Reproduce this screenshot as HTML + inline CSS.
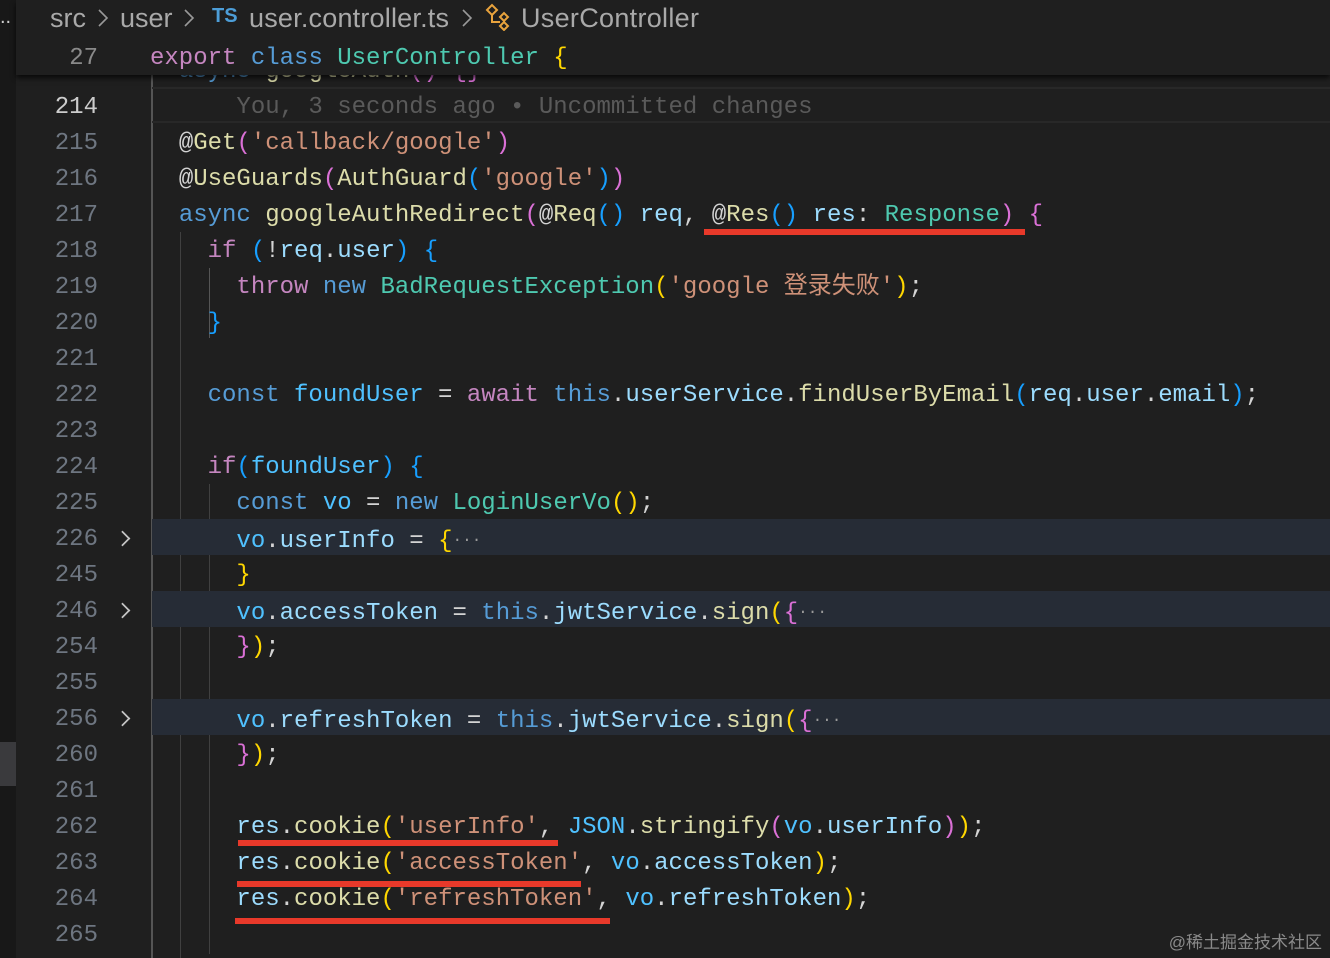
<!DOCTYPE html>
<html><head><meta charset="utf-8"><style>
body{margin:0;width:1330px;height:958px;background:#1f1f1f;overflow:hidden;position:relative;font-family:"Liberation Mono",monospace;font-size:24px;}
.strip{position:absolute;left:0;top:0;width:16px;height:958px;background:#181818;}
.blk{position:absolute;left:0;top:742px;width:16px;height:44px;background:#3a3a3d;}
.row{position:absolute;left:0;width:1330px;height:36px;line-height:42px;white-space:pre;}
.ln{position:absolute;left:20px;width:78px;text-align:right;color:#6e7681;}
.code{position:absolute;left:150px;color:#d4d4d4;}
.hl{position:absolute;left:152px;right:0;top:0;height:36px;background:#262c36;}
.chev{position:absolute;left:116px;top:13px;width:11px;height:11px;border-right:2px solid #c5c5c5;border-top:2px solid #c5c5c5;transform:rotate(45deg) scale(.85);}
.k{color:#569cd6}.c{color:#c586c0}.f{color:#dcdcaa}.s{color:#ce9178}.v{color:#9cdcfe}.t{color:#4ec9b0}
.y{color:#ffd700}.p{color:#da70d6}.b{color:#179fff}.at{color:#d4d4d4}
.g{position:absolute;top:0;width:1px;background:#404040;}
.red{position:absolute;height:6px;background:#e8392a;}
.ell{color:#9a9a9a;font-size:16px;vertical-align:3px;}
.bc{position:absolute;top:0;line-height:36px;font-family:'Liberation Sans',sans-serif;font-size:27px;color:#a9a9a9;white-space:pre;}
</style></head><body>
<div class="strip"></div><div class="blk"></div>

<div style="position:absolute;left:151px;top:75px;width:2px;height:883px;background:#555;"></div>
<div class="g" style="left:180px;top:232px;height:726px;"></div>
<div class="g" style="left:209px;top:268px;height:70px;background:#555"></div>
<div class="g" style="left:209px;top:484px;height:470px;"></div>

<div class="row" style="top:51px"><span class="code"><span class="at">  </span><span class="k">async</span> <span class="f">googleAuth</span><span class="p">()</span> <span class="p">{}</span></span></div>

<div class="row" style="top:87px;border-top:2px solid #282828;border-bottom:2px solid #282828;height:32px;left:152px;width:1178px;"></div>
<div class="row" style="top:87px"><span class="ln" style="color:#cccccc">214</span><span class="code" style="color:#5a5a5a">      You, 3 seconds ago • Uncommitted changes</span></div>
<div class="row" style="top:123px"><span class="ln">215</span><span class="code">  <span class="at">@</span><span class="f">Get</span><span class="p">(</span><span class="s">'callback/google'</span><span class="p">)</span></span></div>
<div class="row" style="top:159px"><span class="ln">216</span><span class="code">  <span class="at">@</span><span class="f">UseGuards</span><span class="p">(</span><span class="f">AuthGuard</span><span class="b">(</span><span class="s">'google'</span><span class="b">)</span><span class="p">)</span></span></div>
<div class="row" style="top:195px"><span class="ln">217</span><span class="code">  <span class="k">async</span> <span class="f">googleAuthRedirect</span><span class="p">(</span><span class="at">@</span><span class="f">Req</span><span class="b">()</span> <span class="v">req</span>, <span class="at">@</span><span class="f">Res</span><span class="b">()</span> <span class="v">res</span>: <span class="t">Response</span><span class="p">)</span> <span class="p">{</span></span></div>
<div class="row" style="top:231px"><span class="ln">218</span><span class="code">    <span class="c">if</span> <span class="b">(</span>!<span class="v">req</span>.<span class="v">user</span><span class="b">)</span> <span class="b">{</span></span></div>
<div class="row" style="top:267px"><span class="ln">219</span><span class="code">      <span class="c">throw</span> <span class="k">new</span> <span class="t">BadRequestException</span><span class="y">(</span><span class="s" style="font-family:'Liberation Mono','Noto Sans CJK SC',monospace">'google 登录失败'</span><span class="y">)</span>;</span></div>
<div class="row" style="top:303px"><span class="ln">220</span><span class="code">    <span class="b">}</span></span></div>
<div class="row" style="top:339px"><span class="ln">221</span></div>
<div class="row" style="top:375px"><span class="ln">222</span><span class="code">    <span class="k">const</span> <span class="v" style="color:#4fc1ff">foundUser</span> = <span class="c">await</span> <span class="k">this</span>.<span class="v">userService</span>.<span class="f">findUserByEmail</span><span class="b">(</span><span class="v">req</span>.<span class="v">user</span>.<span class="v">email</span><span class="b">)</span>;</span></div>
<div class="row" style="top:411px"><span class="ln">223</span></div>
<div class="row" style="top:447px"><span class="ln">224</span><span class="code">    <span class="c">if</span><span class="b">(</span><span class="v" style="color:#4fc1ff">foundUser</span><span class="b">)</span> <span class="b">{</span></span></div>
<div class="row" style="top:483px"><span class="ln">225</span><span class="code">      <span class="k">const</span> <span class="v" style="color:#4fc1ff">vo</span> = <span class="k">new</span> <span class="t">LoginUserVo</span><span class="y">()</span>;</span></div>
<div class="row" style="top:519px"><div class="hl"></div><span class="ln">226</span><div class="chev"></div><span class="code">      <span class="v" style="color:#4fc1ff">vo</span>.<span class="v">userInfo</span> = <span class="y">{</span><span class="ell">···</span></span></div>
<div class="row" style="top:555px"><span class="ln">245</span><span class="code">      <span class="y">}</span></span></div>
<div class="row" style="top:591px"><div class="hl"></div><span class="ln">246</span><div class="chev"></div><span class="code">      <span class="v" style="color:#4fc1ff">vo</span>.<span class="v">accessToken</span> = <span class="k">this</span>.<span class="v">jwtService</span>.<span class="f">sign</span><span class="y">(</span><span class="p">{</span><span class="ell">···</span></span></div>
<div class="row" style="top:627px"><span class="ln">254</span><span class="code">      <span class="p">}</span><span class="y">)</span>;</span></div>
<div class="row" style="top:663px"><span class="ln">255</span></div>
<div class="row" style="top:699px"><div class="hl"></div><span class="ln">256</span><div class="chev"></div><span class="code">      <span class="v" style="color:#4fc1ff">vo</span>.<span class="v">refreshToken</span> = <span class="k">this</span>.<span class="v">jwtService</span>.<span class="f">sign</span><span class="y">(</span><span class="p">{</span><span class="ell">···</span></span></div>
<div class="row" style="top:735px"><span class="ln">260</span><span class="code">      <span class="p">}</span><span class="y">)</span>;</span></div>
<div class="row" style="top:771px"><span class="ln">261</span></div>
<div class="row" style="top:807px"><span class="ln">262</span><span class="code">      <span class="v">res</span>.<span class="f">cookie</span><span class="y">(</span><span class="s">'userInfo'</span>, <span class="v" style="color:#4fc1ff">JSON</span>.<span class="f">stringify</span><span class="p">(</span><span class="v" style="color:#4fc1ff">vo</span>.<span class="v">userInfo</span><span class="p">)</span><span class="y">)</span>;</span></div>
<div class="row" style="top:843px"><span class="ln">263</span><span class="code">      <span class="v">res</span>.<span class="f">cookie</span><span class="y">(</span><span class="s">'accessToken'</span>, <span class="v" style="color:#4fc1ff">vo</span>.<span class="v">accessToken</span><span class="y">)</span>;</span></div>
<div class="row" style="top:879px"><span class="ln">264</span><span class="code">      <span class="v">res</span>.<span class="f">cookie</span><span class="y">(</span><span class="s">'refreshToken'</span>, <span class="v" style="color:#4fc1ff">vo</span>.<span class="v">refreshToken</span><span class="y">)</span>;</span></div>
<div class="row" style="top:915px"><span class="ln">265</span></div>

<div class="red" style="left:704px;top:229px;width:321px;"></div>
<div class="red" style="left:238px;top:840px;width:320px;"></div>
<div class="red" style="left:237px;top:881px;width:344px;"></div>
<div class="red" style="left:235px;top:918px;width:375px;"></div>

<!-- sticky header -->
<div style="position:absolute;left:16px;top:0;width:1314px;height:75px;background:#1f1f1f;box-shadow:0 3px 5px rgba(0,0,0,.7);"></div>
<div style="position:absolute;left:0;top:0;width:16px;height:38px;color:#ccc;font-family:'Liberation Sans',sans-serif;font-size:20px;line-height:34px;">..</div>
<span class="bc" style="left:50px">src</span>
<svg style="position:absolute;left:97px;top:8px" width="12" height="20" viewBox="0 0 12 20"><path d="M2 2 L10 10 L2 18" fill="none" stroke="#999" stroke-width="1.6"/></svg>
<span class="bc" style="left:120px">user</span>
<svg style="position:absolute;left:183px;top:8px" width="12" height="20" viewBox="0 0 12 20"><path d="M2 2 L10 10 L2 18" fill="none" stroke="#999" stroke-width="1.6"/></svg>
<span class="bc" style="left:212px;color:#4d9ed8;font-size:20px;font-weight:bold;top:-2px">TS</span>
<span class="bc" style="left:249px;letter-spacing:0.2px">user.controller.ts</span>
<svg style="position:absolute;left:461px;top:8px" width="12" height="20" viewBox="0 0 12 20"><path d="M2 2 L10 10 L2 18" fill="none" stroke="#999" stroke-width="1.6"/></svg>
<svg style="position:absolute;left:484px;top:3px" width="30" height="28" viewBox="0 0 30 28"><g fill="none" stroke="#e8a33d" stroke-width="2"><path d="M3 7 L8 2 L13 7 L8 12 Z"/><path d="M8 12 V19 H16"/><path d="M16 14 L20 10 L24 14 L20 18 Z"/><path d="M16 23 L20 19 L24 23 L20 27 Z"/></g></svg>
<span class="bc" style="left:521px;letter-spacing:0.3px">UserController</span>
<div class="row" style="top:38px"><span class="ln" style="color:#8a8a8a">27</span><span class="code"><span class="c">export</span> <span class="k">class</span> <span class="t">UserController</span> <span class="y">{</span></span></div>

<div style="position:absolute;right:8px;top:928px;font-family:'Liberation Sans','Noto Sans CJK SC',sans-serif;font-size:17px;color:#8a8a8a;">@稀土掘金技术社区</div>
</body></html>
